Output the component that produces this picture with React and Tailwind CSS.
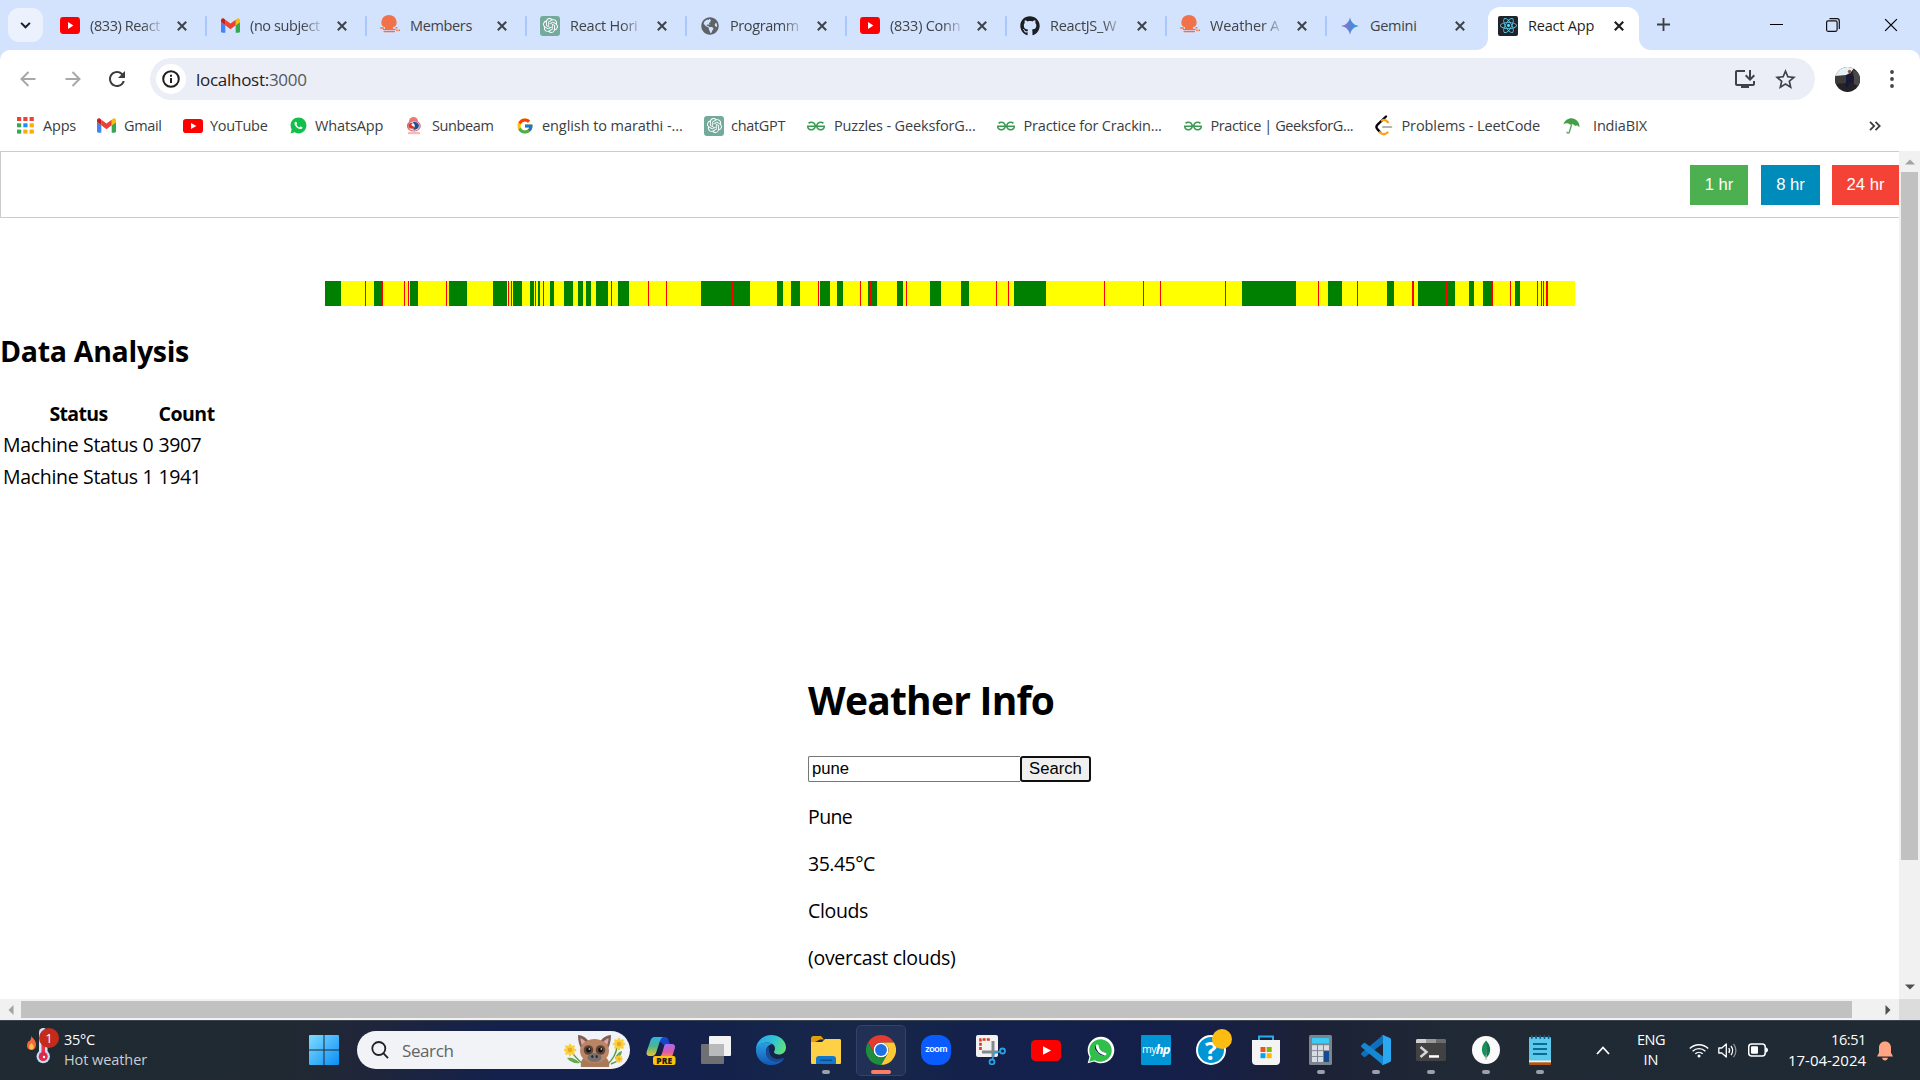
import React from "react";
import { SiOpenai, SiGeeksforgeeks } from "react-icons/si";
import { FaGlobeAmericas, FaReact, FaGithub } from "react-icons/fa";
import { FcGoogle } from "react-icons/fc";
import { RiWhatsappFill } from "react-icons/ri";
import { MdInstallDesktop, MdStarBorder, MdRefresh } from "react-icons/md";

/* ---------- small brand icons ---------- */

const YouTube = ({ className = "w-5 h-[15px]" }) => (
  <svg viewBox="0 0 20 15" preserveAspectRatio="none" className={className}>
    <rect width="20" height="15" rx="3" fill="#f00" />
    <path d="M8 4.400v6.200l5.400-3.100z" fill="#fff" />
  </svg>
);

const Gmail = () => (
  <svg viewBox="52 42 88 66" className="w-[19px] h-[15px]">
    <path fill="#4285f4" d="M58 108h14V74L52 59v43c0 3.32 2.69 6 6 6" />
    <path fill="#34a853" d="M120 108h14c3.32 0 6-2.69 6-6V59l-20 15" />
    <path fill="#fbbc04" d="M120 48v26l20-15v-8c0-7.42-8.47-11.65-14.4-7.2" />
    <path fill="#ea4335" d="M72 74V48l24 18 24-18v26L96 92" />
    <path fill="#c5221f" d="M52 51v8l20 15V48l-5.6-4.2c-5.94-4.45-14.4-.22-14.4 7.2" />
  </svg>
);

const Octopus = () => (
  <svg viewBox="0 0 20 18" className="-mt-[3px] w-5 h-[18px]" fill="#f0714a">
    <path d="M3 11.600C0 9.500.8 0 9 0s9 9.500 6 11.600c-1 .6-2 .3-2 .3v1.800h2.600v1.200H2.800v-1.200H5v-1.800s-1 .3-2-.3z" />
    <rect x="3.500" y="15.800" width="11.500" height="1.400" rx=".6" />
    <rect x="0" y="12.300" width="4" height="1.400" rx=".7" />
    <rect x="15.600" y="12" width="1.800" height="1.500" />
    <rect x="16.200" y="14.600" width="1.600" height="1.500" />
    <rect x="18.400" y="14.600" width="1.600" height="1.500" />
  </svg>
);

const OpenAI = () => (
  <span className="flex w-5 h-5 items-center justify-center rounded-[3px] bg-[#74aa9c]">
    <SiOpenai size={15} color="#fff" />
  </span>
);

const Gemini = () => (
  <svg viewBox="0 0 18 18" className="w-[18px] h-[18px]">
    <defs>
      <linearGradient id="gem" x1="0" x2="1">
        <stop offset="0" stopColor="#a06cc9" />
        <stop offset=".5" stopColor="#5a83d8" />
        <stop offset="1" stopColor="#16a5dc" />
      </linearGradient>
    </defs>
    <path d="M9 0c.7 5 4 8.300 9 9-5 .7-8.300 4-9 9-.7-5-4-8.300-9-9 5-.7 8.300-4 9-9z" fill="url(#gem)" />
  </svg>
);

const ReactLogo = () => (
  <span className="flex w-5 h-5 items-center justify-center rounded-[2px] bg-[#20232a]">
    <FaReact size={17} color="#61dafb" />
  </span>
);

const AppsGrid = () => (
  <svg viewBox="0 0 17 17" className="w-[17px] h-[17px]">
    {["#ea4335", "#ea4335", "#ea4335", "#34a853", "#1a8cff", "#fbab05", "#34a853", "#fbab05", "#fbab05"].map((c, i) => (
      <rect key={i} x={(i % 3) * 6.3} y={Math.floor(i / 3) * 6.3} width="4.200" height="4" fill={c} />
    ))}
  </svg>
);

const Sunbeam = () => (
  <svg viewBox="0 0 16 18" className="w-4 h-[18px]">
    <circle cx="7.500" cy="4.500" r="4.500" fill="#e87a7a" />
    <path d="M.8 9a7 5.500 0 0 1 14 0 7 5.500 0 0 1-14 0z" fill="#e06a6a" />
    <ellipse cx="8" cy="9" rx="5.500" ry="4.600" fill="#f4f7fc" />
    <path d="M6.500 5.500c3-1.500 6.500.5 6.500 3.500-.5 3-4 4.500-6.500 3.300 3-2 3-5 0-6.800z" fill="#1f4d96" />
    <path d="M2.500 8c1-2.500 4-3.300 5-1-1 .5-1 2.500 1 3.500-2 2.500-6 1.500-6-2.500z" fill="#d8352f" />
    <circle cx="6.800" cy="7.800" r="1.300" fill="#fff" />
    <path d="M2 15h12v2.200H2z" fill="#f1bcbc" />
  </svg>
);

const LeetCode = () => (
  <svg viewBox="0 0 18 21" className="w-[18px] h-[21px]" fill="none" strokeLinecap="round">
    <path d="M11 1.500 2.600 9.600c-1.600 1.600-1.600 3.200 0 4.800l2.600 2.800" stroke="#000" strokeWidth="2.300" />
    <path d="M5 17.200c2.500 2.600 5 2.600 7.500.3" stroke="#ffa116" strokeWidth="2.300" />
    <path d="M7 5.500c2-1.200 4-.8 6 1.700" stroke="#ffa116" strokeWidth="2.300" />
    <path d="M8 12h8.300" stroke="#b3b3b3" strokeWidth="2.100" />
  </svg>
);

const Umbrella = () => (
  <svg viewBox="0 0 17 16" className="w-[17px] h-4">
    <path d="M.5 6.500C2 1 8-1 12 1.300c3 1.600 4.700 4.200 4.500 8-1.500-1.800-3-2-4.300-1.400C10.500 6 9 5.800 7.300 6.700 5 5 2.500 4.900.5 6.500z" fill="#43a047" />
    <path d="M8.600 6.500 6.400 14c-.4 1.500-2.400 1.500-2.600-.3" fill="none" stroke="#5aa35e" strokeWidth="1.300" />
  </svg>
);

/* ---------- browser chrome ---------- */

const Cross = ({ className = "w-[10px] h-[10px]", width = 2 }) => (
  <svg viewBox="0 0 10 10" className={className} fill="none" stroke="currentColor" strokeWidth={width}>
    <path d="M.8.8l8.400 8.400M9.200.8.800 9.200" />
  </svg>
);

const tabs = [
  { icon: <YouTube className="w-5 h-[17px]" />, title: "(833) React", t: "tracking-[-0.4px]", fade: true },
  { icon: <Gmail />, title: "(no subject", t: "tracking-[-0.4px]", fade: true },
  { icon: <Octopus />, title: "Members", t: "tracking-[-0.36px]" },
  { icon: <OpenAI />, title: "React Hori", t: "tracking-[-0.25px]", fade: true },
  { icon: <FaGlobeAmericas size={18} color="#5f6368" />, title: "Programm", t: "tracking-[-0.4px]", fade: true },
  { icon: <YouTube className="w-5 h-[17px]" />, title: "(833) Conn", t: "tracking-[-0.25px]", fade: true },
  { icon: <FaGithub size={20} color="#1b1f24" />, title: "ReactJS_W", t: "tracking-[-0.3px]", fade: true },
  { icon: <Octopus />, title: "Weather A", t: "tracking-[-0.15px]", fade: true },
  { icon: <Gemini />, title: "Gemini", t: "tracking-[-0.3px]" },
];

const TabStrip = () => (
  <div className="flex h-[50px] bg-[#d3e2fd] text-[#3f4347]">
    <div className="mt-2 ml-2 flex h-[34px] w-[35px] items-center justify-center rounded-[11px] bg-[#ebf2fe]">
      <svg viewBox="0 0 12 8" className="w-[11px] h-[7px]" fill="none" stroke="#1f1f1f" strokeWidth="2.300">
        <path d="M1 1l5 5 5-5" />
      </svg>
    </div>
    <div className="ml-1 flex">
      {tabs.map((tab, i) => (
        <div key={i} className="flex h-[50px] w-[160px] shrink-0 items-center pt-px last:w-[161px] last:[&>svg]:ml-[12px]">
          <span className="ml-[12px] flex w-[22px] justify-center">{tab.icon}</span>
          <span
            className={`ml-[9px] w-[73px] whitespace-nowrap text-[14.5px] ${
              tab.fade ? "[mask-image:linear-gradient(to_right,black_72%,transparent_102%)]" : ""
            } ${tab.t}`}
          >
            {tab.title}
          </span>
          <Cross className="ml-[14px] w-[10px] h-[10px]" />
          <span className={i < 8 ? "ml-[18px] h-5 w-[2px] rounded bg-[#a8c7fa]" : "hidden"} />
        </div>
      ))}
    </div>
    <div className="-ml-[12px] mt-[38px] h-3 w-3 overflow-hidden bg-white">
      <div className="h-3 w-3 rounded-br-xl bg-[#d3e2fd]" />
    </div>
    <div className="mt-[7px] flex h-[43px] w-[151px] items-center rounded-t-xl bg-white pb-[6px] text-[#1f1f1f]">
      <span className="ml-[10px]">
        <ReactLogo />
      </span>
      <span className="ml-[10px] text-[14.5px] tracking-[-0.2px]">React App</span>
      <Cross className="ml-[20px] w-[10px] h-[10px]" width={2.2} />
    </div>
    <div className="mt-[38px] h-3 w-3 bg-white">
      <div className="h-3 w-3 rounded-bl-xl bg-[#d3e2fd]" />
    </div>
    <svg viewBox="0 0 14 14" className="ml-[6px] mt-[18px] w-[13px] h-[13px]" stroke="#3c4043" strokeWidth="2">
      <path d="M7 0v14M0 7h14" />
    </svg>
    <div className="ml-auto mr-[22px] flex h-[49px] items-center text-black">
      <span className="h-px w-[13px] bg-black" />
      <svg viewBox="0 0 14 14" className="ml-[43px] w-[14px] h-[14px]" fill="none" stroke="#111" strokeWidth="1.200">
        <rect x=".6" y="2.800" width="10.500" height="10.500" rx="1.500" />
        <path d="M3.500.7H11a2.300 2.300 0 0 1 2.300 2.300v8" />
      </svg>
      <Cross className="ml-[44px] w-[14px] h-[14px]" width={0.9} />
    </div>
  </div>
);

const Toolbar = () => (
  <div className="bg-[#d3e2fd]">
    <div className="flex h-[50px] items-start rounded-t-[10px] bg-white pt-2">
      <div className="flex h-[42px] w-[150px] items-center pl-5">
        <svg viewBox="0 0 16 16" className="w-4 h-4" fill="none" stroke="#a8a8a8" strokeWidth="2">
          <path d="M15.500 8H1.500M8.500 1 1.500 8l7 7" />
        </svg>
        <svg viewBox="0 0 16 16" className="ml-[29px] w-4 h-4" fill="none" stroke="#a8a8a8" strokeWidth="2">
          <path d="M.5 8h14M7.500 1l7 7-7 7" />
        </svg>
        <MdRefresh size={24} color="#3c3c3c" className="ml-[24px]" />
      </div>
      <div className="flex h-[42px] w-[1665px] items-center rounded-full bg-[#ebeef7]">
        <span className="ml-[6px] flex h-[30px] w-[30px] items-center justify-center rounded-full bg-white">
          <svg viewBox="0 0 18 18" className="w-[18px] h-[18px]" fill="none" stroke="#1f1f1f" strokeWidth="2">
            <circle cx="9" cy="9" r="7.800" />
            <path d="M9 8v5M9 4.700v2" />
          </svg>
        </span>
        <span className="ml-[10px] pt-px text-[17px] tracking-[-0.28px] text-[#1f2124]">
          localhost:<span className="text-[#55585c]">3000</span>
        </span>
        <MdInstallDesktop size={24} color="#3f4248" className="ml-auto mr-4" />
        <MdStarBorder size={25} color="#3f4248" className="mr-[17px]" />
      </div>
      <svg viewBox="0 0 25 25" className="ml-5 mt-[9px] w-[25px] h-[25px]">
        <defs>
          <clipPath id="avatar">
            <circle cx="12.500" cy="12.500" r="12.500" />
          </clipPath>
        </defs>
        <g clipPath="url(#avatar)">
          <rect width="25" height="25" fill="#232227" />
          <path d="M0 0h20l-4 5-2 4-14 0z" fill="#e3f1f4" />
          <path d="M0 9l11-1 1 8-12 1z" fill="#3f3a3a" />
          <path d="M18 3l7 3v14l-6-3z" fill="#4c4748" />
          <circle cx="14.500" cy="4.500" r="1.700" fill="#8a5a4c" />
          <path d="M11 8l4-2 4 4-1 5-4 1-2 5-2-2 1-4z" fill="#161a35" />
        </g>
      </svg>
      <svg viewBox="0 0 4 18" className="ml-[30px] mt-[12px] w-1 h-[18px]" fill="#444">
        <circle cx="2" cy="2" r="1.900" />
        <circle cx="2" cy="9" r="1.900" />
        <circle cx="2" cy="16" r="1.900" />
      </svg>
    </div>
  </div>
);

const Geeks = () => <SiGeeksforgeeks size={18} color="#3b9a53" />;

const bookmarks = [
  { icon: <AppsGrid />, w: "w-[80px]", i: "w-[26px]", t: "tracking-[-0.2px]", label: "Apps" },
  { icon: <Gmail />, w: "w-[86px]", i: "w-[27px]", t: "tracking-[-0.35px]", label: "Gmail" },
  { icon: <YouTube className="w-5 h-[14px]" />, w: "w-[106px]", i: "w-[27px]", t: "tracking-[-0.3px]", label: "YouTube" },
  { icon: <RiWhatsappFill size={19} color="#11c04a" />, w: "w-[117px]", i: "w-[26px]", t: "tracking-[-0.12px]", label: "WhatsApp" },
  { icon: <Sunbeam />, w: "w-[110px]", i: "w-[26px]", t: "tracking-[-0.4px]", label: "Sunbeam" },
  { icon: <FcGoogle size={18} />, w: "w-[188px]", i: "w-[26px]", t: "tracking-[-0.08px]", label: "english to marathi -..." },
  { icon: <OpenAI />, w: "w-[103px]", i: "w-[27px]", t: "tracking-[-0.3px]", label: "chatGPT" },
  { icon: <Geeks />, w: "w-[190px]", i: "w-[27px]", t: "tracking-[-0.15px]", label: "Puzzles - GeeksforG..." },
  { icon: <Geeks />, w: "w-[187px]", i: "w-[26.5px]", t: "tracking-[-0.18px]", label: "Practice for Crackin..." },
  { icon: <Geeks />, w: "w-[191px]", i: "w-[26.5px]", t: "tracking-[-0.4px]", label: "Practice | GeeksforG..." },
  { icon: <LeetCode />, w: "w-[188px]", i: "w-[26.5px]", t: "tracking-[-0.1px]", label: "Problems - LeetCode" },
  { icon: <Umbrella />, w: "w-[100px]", i: "w-[30px]", t: "tracking-[-0.16px]", label: "IndiaBIX" },
];

const Bookmarks = () => (
  <div className="flex h-[51px] items-center bg-white pl-[17px] text-[14.5px] text-[#3a3d41]">
    {bookmarks.map((b) => (
      <div key={b.label} className={`flex shrink-0 items-center whitespace-nowrap ${b.w}`}>
        <span className={`shrink-0 ${b.i}`}>{b.icon}</span>
        <span className={b.t}>{b.label}</span>
      </div>
    ))}
    <svg viewBox="0 0 12 10" className="ml-auto mr-[39px] w-3 h-[10px]" fill="none" stroke="#3c4043" strokeWidth="1.800">
      <path d="M1 .8 5.200 5 1 9.200M6.500.8 10.700 5 6.500 9.200" />
    </svg>
  </div>
);

/* ---------- machine status timeline ---------- */

const END = 1575;
const timeline =
  "g325 y341 r365 y366 g374 r382 y383 r404 y405 r408 y409 g410 y418 r446 y447 g449 y467 g493 r501 g502 y507 r508 y509 r511 y512 g513 r519 g520 y522 g530 y534 r535 y536 g538 r539 y540 r543 y544 g550 y554 g564 y573 g578 y583 g586 y591 g596 y608 r611 y612 g618 y629 r648 y649 r666 y667 g701 r732 g733 r743 g744 y750 g777 y783 g791 y800 r818 y819 g820 y830 g837 y843 r860 y861 g868 r870 g871 y877 g897 y903 r906 y907 g930 y941 g961 y969 r996 y997 r1008 y1009 g1014 y1046 r1104 y1105 r1143 y1144 r1160 y1161 r1225 y1226 g1242 r1283 g1284 y1296 r1318 y1319 g1328 y1342 r1357 y1358 g1387 y1394 r1412 y1414 g1418 r1425 g1426 r1445 g1447 y1455 g1469 y1474 g1483 r1492 y1493 r1510 y1511 g1515 y1520 r1537 y1538 r1541 y1542 r1543 y1544 r1546 y1548"
    .split(" ")
    .map((s) => ({ color: s[0], start: Number(s.slice(1)) }));

const segmentColor = { g: "bg-[#008000]", y: "bg-[#ffff00]", r: "bg-[#ff0000]" };

const Timeline = () => (
  <div className="ml-[325px] mt-[63px] flex h-[25px] w-[1250px]">
    {timeline.map((s, i) => (
      <div
        key={s.start}
        className={`shrink-0 ${segmentColor[s.color]}`}
        style={{ width: (timeline[i + 1]?.start ?? END) - s.start }}
      />
    ))}
  </div>
);

/* ---------- page ---------- */

const Page = () => (
  <div className="h-[848px] w-[1899px] overflow-hidden bg-white text-black">
    <div className="flex h-[67px] items-center justify-end border border-r-0 border-[#ccc] font-['Liberation_Sans',sans-serif] text-[16.67px] text-white">
      <button className="h-10 w-[58px]  bg-[#4caf50]">1 hr</button>
      <button className="ml-[13px] h-10 w-[59px] bg-[#008cba]">8 hr</button>
      <button className="ml-3 h-10 w-[67px] bg-[#f44336]">24 hr</button>
    </div>
    <Timeline />
    <h2 className="mt-[25px] text-[28.5px] font-bold leading-[40px] tracking-[-0.3px]">Data Analysis</h2>
    <div className="mt-[27px] text-[19.5px]">
      <div className="flex h-[31px] font-bold leading-[31px]">
        <span className="w-[157px] text-center tracking-[-0.65px]">Status</span>
        <span className="pl-[1.5px] tracking-[-0.5px]">Count</span>
      </div>
      {[
        ["Machine Status 0", "3907"],
        ["Machine Status 1", "1941"],
      ].map(([k, v]) => (
        <div key={k} className="flex h-8 pl-[3px] leading-8">
          <span className="w-[155.5px] tracking-[-0.32px]">{k}</span>
          <span className="tracking-[-0.45px]">{v}</span>
        </div>
      ))}
    </div>
    <div className="ml-[808px] mt-[180px]">
      <h1 className="text-[39px] font-bold leading-[54px] tracking-[-0.78px]">Weather Info</h1>
      <div className="mt-[29px] flex font-['Liberation_Sans',sans-serif] text-[16.67px] leading-5">
        <div className="h-[26px] w-[212px] rounded-l-[2px] border border-r-0 border-[#767676] pl-[3px] pt-[2px]">pune</div>
        <button className="h-[26px] w-[71px] rounded-[3px] border-2 border-[#101010] bg-[#efefef]">Search</button>
      </div>
      <div className="mt-[21px] flex flex-col gap-[19px] text-[19.5px] leading-[28px]">
        <p className="tracking-[-0.6px]">Pune</p>
        <p className="tracking-[-0.5px]">35.45°C</p>
        <p className="tracking-[-0.35px]">Clouds</p>
        <p className="tracking-[-0.3px]">(overcast clouds)</p>
      </div>
    </div>
  </div>
);

const Arrow = ({ className, fill = "#505050" }) => (
  <svg viewBox="0 0 10 10" className={className} fill={fill}>
    <path d="M0 2.500h10L5 7.500z" />
  </svg>
);

const VerticalBar = () => (
  <div className="flex h-[848px] w-[21px] flex-col items-center bg-[#f1f1f1]">
    <Arrow className="mt-[6px] w-[10px] h-[10px] rotate-180" fill="#a3a3a3" />
    <div className="mt-[5px] h-[688px] w-[17px] bg-[#c1c1c1]" />
    <Arrow className="mb-[7px] mt-auto w-[10px] h-[10px]" />
  </div>
);

const HorizontalBar = () => (
  <div className="flex h-[21px] bg-[#f1f1f1]">
    <div className="flex w-[1899px] items-center">
      <Arrow className="ml-[6px] w-[10px] h-[10px] rotate-90" fill="#a3a3a3" />
      <div className="ml-[5px] h-[17px] w-[1831px] bg-[#c1c1c1]" />
      <Arrow className="ml-auto mr-[6px] w-[10px] h-[10px] -rotate-90" />
    </div>
    <div className="w-[21px] bg-[#dcdcdc]" />
  </div>
);

/* ---------- taskbar icons ---------- */

const Copilot = () => (
  <svg viewBox="0 0 30 30" className="w-[30px] h-[30px]">
    <defs>
      <linearGradient id="cpa" x1="0" y1="0" x2="0" y2="1">
        <stop offset="0" stopColor="#29b6e8" />
        <stop offset=".5" stopColor="#4fb58a" />
        <stop offset="1" stopColor="#ecc531" />
      </linearGradient>
      <linearGradient id="cpb" x1="0" y1="0" x2="0" y2="1">
        <stop offset="0" stopColor="#a66bf0" />
        <stop offset=".6" stopColor="#e05aa8" />
        <stop offset="1" stopColor="#f58b60" />
      </linearGradient>
    </defs>
    <path d="M8 2h11c2 0 3 1.500 3.600 3.500L24 10h-6z" fill="#1747c8" />
    <path d="M8.500 2H17c-2 1-3 3-4 7l-3 9c-.8 2-2 3-4 3H3.500C1 21 0 19 .7 16.500L4.500 5.500C5.300 3.300 6.500 2 8.500 2z" fill="url(#cpa)" />
    <path d="M20 9h6c2.500 0 3.500 2 2.800 4.500L26 22H13c2-1 2.500-2 3.500-5l1.500-5.500C18.400 10 19 9 20 9z" fill="url(#cpb)" />
    <rect x="7" y="21" width="22.500" height="9" rx="2" fill="#fdc30f" />
    <text x="18.200" y="28.600" textAnchor="middle" fontFamily="Open Sans" fontWeight="800" fontSize="8.500" fill="#1a1a1a">PRE</text>
  </svg>
);

const TaskView = () => (
  <svg viewBox="0 0 30 30" className="w-[30px] h-[30px]">
    <rect x="0" y="9" width="23" height="20" rx="1" fill="#6f7072" />
    <rect x="8" y="1" width="22" height="20" rx="1" fill="#f3f3f3" />
    <rect x="8" y="9" width="15" height="12" fill="#b9babc" />
  </svg>
);

const Edge = () => (
  <svg viewBox="0 0 30 30" className="w-[30px] h-[30px]">
    <defs>
      <linearGradient id="ea" x1="0" y1=".2" x2="1" y2=".5">
        <stop offset="0" stopColor="#2aa5e8" />
        <stop offset=".55" stopColor="#2fc3d8" />
        <stop offset="1" stopColor="#5fe07a" />
      </linearGradient>
      <linearGradient id="eb" x1="0" y1="0" x2="0" y2="1">
        <stop offset="0" stopColor="#2b9fe6" />
        <stop offset="1" stopColor="#1257b3" />
      </linearGradient>
    </defs>
    <path d="M15 0c9 0 15 6 15 12.500 0 4.500-3.500 7-7 7-3 0-5-1.300-5-2.500 0-1 1-1.500 1-3.500 0-3.500-3.500-6-8-6C6 7.500 1.500 10 0 15 0 6 7 0 15 0z" fill="url(#ea)" />
    <path d="M0 15C1 10 6 7.500 11 7.500c2 0 4 .5 5.500 1.500-4 .5-6.500 4-6.500 7.500 0 6 5 10 10 10 3 0 5-.7 7.500-2C25 28 20.500 30 15 30 6.500 30 0 23.500 0 15z" fill="url(#eb)" />
    <path d="M13 11.500c-2 1.500-3 3.500-3 6 0 5.500 4.500 9 10 9 3 0 5.500-1 7.500-2.300.8-.6.200-1.500-.7-1.100-7 3-15-.6-13.800-11.600z" fill="#1b4a94" />
  </svg>
);

const Folder = () => (
  <svg viewBox="0 0 30 28" className="w-[30px] h-7">
    <path d="M0 2.500C0 1 1 0 2.500 0H10l3 3.500h-4L0 8z" fill="#e09f0b" />
    <path d="M0 6h11l3-3h14.500c1 0 1.500.7 1.500 1.500v22c0 1-.5 1.500-1.500 1.500h-27C.5 28 0 27.500 0 26.500z" fill="#fdd046" />
    <path d="M5 28v-5c0-2 1-3 3-3h14c2 0 3 1 3 3v5z" fill="#1178cc" />
    <rect x="9" y="23.500" width="12" height="1.500" rx=".7" fill="#0a4f93" />
  </svg>
);

const Chrome = () => (
  <svg viewBox="0 0 48 48" className="w-[30px] h-[30px]">
    <circle cx="24" cy="24" r="12" fill="#fff" />
    <path d="M24 12h20.781a23.994 23.994 0 0 0-41.564.003L13.608 30l.009-.002A11.985 11.985 0 0 1 24 12z" fill="#e33b2e" />
    <circle cx="24" cy="24" r="9.500" fill="#1f6fe5" />
    <path d="M34.391 30.003 24.001 48A23.994 23.994 0 0 0 44.780 12.003H23.999l-.003.009a11.985 11.985 0 0 1 10.395 17.991z" fill="#fcc934" />
    <path d="M13.609 30.003 3.218 12.006A23.994 23.994 0 0 0 24.003 48l10.390-17.997-.007-.007a11.985 11.985 0 0 1-20.777.007z" fill="#1e8e3e" />
  </svg>
);

const Zoom = () => (
  <span className="flex h-[30px] w-[30px] items-center justify-center rounded-[12px] bg-[#0b5cff] pb-[2px] font-['Lato',sans-serif] text-[9.5px] font-bold tracking-[-0.3px] text-white">
    zoom
  </span>
);

const Snip = () => (
  <svg viewBox="0 0 30 30" className="w-[30px] h-[30px]">
    <rect x="0" y="0" width="22" height="22" rx="2" fill="#f2f2f2" />
    <path d="M4.500 15V4.500H15" fill="none" stroke="#d83b1f" strokeWidth="2.600" strokeDasharray="3 1.200" />
    <path d="M6 17h16M17 6v16" fill="none" stroke="#85898e" strokeWidth="3" />
    <circle cx="26.500" cy="16" r="2.500" fill="none" stroke="#2c9fe0" strokeWidth="1.800" />
    <circle cx="16" cy="27" r="2.500" fill="none" stroke="#2c9fe0" strokeWidth="1.800" />
    <path d="M18 18l6-1.500M18 18l-1.500 6.500" stroke="#2c9fe0" strokeWidth="1.600" />
  </svg>
);

const WhatsAppApp = () => (
  <span className="relative flex h-[28px] w-[28px] items-center justify-center">
    <RiWhatsappFill size={32} color="#fff" className="absolute -left-[2px] -top-[2px]" />
    <RiWhatsappFill size={27} color="#2fbf4a" className="relative" />
    <svg viewBox="0 0 24 24" className="absolute left-[1px] top-[1px] w-[26px] h-[26px]" fill="none" stroke="#fff" strokeWidth="2.600" strokeLinecap="round">
      <path d="M8.500 8.300c0 3.600 3.300 7.200 7.200 7.400" />
    </svg>
  </span>
);

const MyHp = () => (
  <span className="flex h-[30px] w-[30px] items-center justify-center rounded-[1px] bg-[#0096d6] pb-px font-['Open_Sans',sans-serif] text-white">
    <span className="text-[10.5px] tracking-[-0.6px]">my</span>
    <span className="text-[13px] font-bold italic tracking-[-0.8px]">hp</span>
  </span>
);

const Help = () => (
  <span className="relative flex h-[30px] w-[30px] items-center justify-center rounded-full border-2 border-white bg-[#0096d6] font-['Open_Sans',sans-serif] text-[25px] font-bold leading-none text-white">
    ?
    <span className="absolute -right-[8px] -top-[8px] h-5 w-5 rounded-full bg-[#fdbc11]" />
  </span>
);

const Store = () => (
  <svg viewBox="0 0 30 30" className="w-[30px] h-[30px]">
    <path d="M8 7V1.500h14V7" fill="none" stroke="#27aee8" strokeWidth="2" />
    <path d="M1 5h28v21c0 2.500-1.500 4-4 4H5c-2.500 0-4-1.500-4-4z" fill="#f4f4f4" />
    <path d="M8 5.500h14" stroke="#27aee8" strokeWidth="0" />
    <rect x="9.500" y="12" width="5" height="5" fill="#f25022" />
    <rect x="15.700" y="12" width="5" height="5" fill="#7fba00" />
    <rect x="9.500" y="18.200" width="5" height="5" fill="#00a4ef" />
    <rect x="15.700" y="18.200" width="5" height="5" fill="#ffb900" />
  </svg>
);

const Calculator = () => (
  <svg viewBox="0 0 23 30" className="w-[23px] h-[30px]">
    <rect width="23" height="30" rx="1.500" fill="#7b858e" />
    <rect x="3" y="3" width="17" height="5.500" fill="#3ccbf4" />
    {[0, 1, 2, 3, 4, 6, 7].map((n) => (
      <rect key={n} x={3 + (n % 3) * 6} y={10.2 + Math.floor(n / 3) * 5.9} width="5" height="5" fill="#d7dde2" />
    ))}
    <rect x="15" y="16.100" width="5" height="10.900" fill="#164a94" />
  </svg>
);

const VsCode = () => (
  <svg viewBox="0 0 30 30" className="w-[30px] h-[30px]">
    <path d="M22 0 22 8.500 4.500 21.800c-.6.500-1.300.4-1.800 0L.6 19.900c-.7-.6-.7-1.500 0-2.100z" fill="#0f6fb8" />
    <path d="M22 30v-8.500L4.500 8.200c-.6-.5-1.300-.4-1.800 0L.6 10.100c-.7.6-.7 1.500 0 2.100z" fill="#1688d3" />
    <path d="M22 0l7 3c.6.300 1 .9 1 1.600v20.800c0 .7-.4 1.300-1 1.600L22 30c-.8.300-1.500 0-2-.4.900.5 2 .1 2-1.100v-27c0-1.200-1.100-1.600-2-1.100.5-.4 1.200-.7 2-.4z" fill="#2aa8f2" />
  </svg>
);

const Terminal = () => (
  <svg viewBox="0 0 30 22" className="w-[30px] h-[22px]">
    <rect width="30" height="22" rx="1.500" fill="#424242" />
    <path d="M0 1.500C0 .7.700 0 1.500 0H10v4H0z" fill="#d0d0d0" />
    <path d="M10 0h10v4H10z" fill="#9a9a9a" />
    <path d="M20 0h8.500c.8 0 1.500.7 1.500 1.500V4H20z" fill="#6c6c6c" />
    <path d="M4.500 8l6 5-6 5" fill="none" stroke="#d5d5d5" strokeWidth="2.500" />
    <rect x="13" y="16.200" width="10" height="2.500" fill="#fff" />
  </svg>
);

const Mongo = () => (
  <svg viewBox="0 0 28 28" className="w-7 h-7">
    <circle cx="14" cy="14" r="14" fill="#fafafa" />
    <path d="M14 4.500c5.500 5.500 5.500 12.500.3 17.500z" fill="#10774f" />
    <path d="M14 4.500C8.500 10 8.500 17 14 22z" fill="#13935a" />
    <rect x="13.500" y="19" width="1" height="5" fill="#9fb3a5" />
  </svg>
);

const Notepad = () => (
  <svg viewBox="0 0 22 30" className="w-[22px] h-[30px]">
    <rect y="2" width="22" height="25" rx="1" fill="#5cc8ea" />
    <path d="M0 26h22v3c0 .6-.4 1-1 1H1c-.6 0-1-.4-1-1z" fill="#b5560f" />
    <rect y="25.500" width="22" height="1.800" fill="#f0f0f0" />
    {[2, 6.2, 10.4, 14.6, 18.8].map((x) => (
      <rect key={x} x={x} y="0" width="1.700" height="4" rx=".8" fill="#0c5c85" />
    ))}
    <path d="M4 9h14M4 14h14M4 19h14" stroke="#0b6a96" strokeWidth="1.800" />
  </svg>
);

const apps = [
  { icon: <Copilot /> },
  { icon: <TaskView /> },
  { icon: <Edge /> },
  { icon: <Folder />, dot: true },
  { icon: <Chrome />, active: true },
  { icon: <Zoom /> },
  { icon: <Snip /> },
  { icon: <YouTube className="w-[30px] h-[21px]" /> },
  { icon: <WhatsAppApp /> },
  { icon: <MyHp /> },
  { icon: <Help /> },
  { icon: <Store /> },
  { icon: <Calculator />, dot: true },
  { icon: <VsCode />, dot: true },
  { icon: <Terminal />, dot: true },
  { icon: <Mongo />, dot: true },
  { icon: <Notepad />, dot: true },
];

const WeatherWidget = () => (
  <div className="flex w-[309px] pl-[26px] text-[14.5px] text-white">
    <div className="relative w-[38px]">
      <svg viewBox="0 0 34 44" className="mt-px w-[34px] h-11">
        <path d="M5.500 14c1 2.500 4.500 4 4.500 8.500C10 26 8 28 5.500 28S1 26.500 1 23.500c0-2 1-3 1.500-4.500C4 20 5 17 5.500 14z" fill="#f26a3c" />
        <path d="M5.500 21c1.300 1.500 2.200 2.400 2.200 4 0 1.500-.9 2.500-2.200 2.500s-2.300-1-2.300-2.500 1-2.500 2.300-4z" fill="#fdc14b" />
        <rect x="13" y="6" width="8.500" height="28" rx="4.200" fill="#d6e6f5" />
        <circle cx="17.200" cy="34.500" r="6.700" fill="#c5dcf2" />
        <rect x="15.500" y="16" width="3.500" height="17" fill="#e3344f" />
        <circle cx="17.200" cy="34.500" r="4.500" fill="#e0294a" />
        <circle cx="18" cy="35" r="1.200" fill="#fff" />
      </svg>
      <span className="absolute left-[13px] top-[7px] flex h-5 w-5 items-center justify-center rounded-full bg-[#c42b1c] text-[13px] leading-none">
        1
      </span>
    </div>
    <div className="pt-[9px] leading-5">
      <div className="tracking-[-0.3px]">35°C</div>
      <div className="tracking-[-0.08px] text-[#c9ced2]">Hot weather</div>
    </div>
  </div>
);

const Flower = ({ x, y, r }) => (
  <g>
    {[0, 45, 90, 135].map((a) => (
      <ellipse key={a} cx={x} cy={y} rx={r} ry={r * 0.32} fill="#f8cf3c" transform={`rotate(${a} ${x} ${y})`} />
    ))}
    <circle cx={x} cy={y} r={r * 0.35} fill="#eda91c" />
  </g>
);

const SearchArt = () => (
  <svg viewBox="0 0 62 38" className="mr-[4px] w-[62px] h-[38px]">
    <path d="M6 18c3 6 7 10 13 15M53 16c-1 8-4 12-9 17M57 27c-3 3-7 5-10 6" fill="none" stroke="#5b9a46" strokeWidth="1.500" />
    <path d="M3 27c5-1 9 1 13 5-5 1-10-1-13-5zM58 20c-4 1-6 4-7 8 4-1 7-4 7-8z" fill="#6aa84f" />
    <Flower x={6} y={19} r={6.5} />
    <Flower x={55} y={13} r={6.5} />
    <Flower x={55} y={28} r={4} />
    <path d="M17 36c-1-6 2-9 4-10h20c3 2 5 5 4 10z" fill="#a9795a" />
    <path d="M14 4c4 0 9 3 11 7l-7 8c-3-4-4-10-4-15zM47 4c-4 0-9 3-11 7l7 8c3-4 4-10 4-15z" fill="#7d5f57" />
    <path d="M16.500 7c3 1.500 5 3 6.500 6l-4 3c-2-3-2.500-6-2.500-9zM44.500 7c-3 1.500-5 3-6.500 6l4 3c2-3 2.500-6 2.500-9z" fill="#e5a3a3" />
    <ellipse cx="30.500" cy="20" rx="14.500" ry="12" fill="#b98563" />
    <circle cx="24.500" cy="19" r="4.800" fill="#5f4238" />
    <circle cx="36.500" cy="19" r="4.800" fill="#5f4238" />
    <circle cx="24.500" cy="19" r="2.400" fill="#111" />
    <circle cx="36.500" cy="19" r="2.400" fill="#111" />
    <circle cx="25.300" cy="18" r=".8" fill="#fff" />
    <circle cx="37.300" cy="18" r=".8" fill="#fff" />
    <ellipse cx="30.500" cy="26.500" rx="7" ry="4.500" fill="#77706f" />
    <ellipse cx="28.300" cy="25.500" rx="1.100" ry="1.500" fill="#2b2627" />
    <ellipse cx="32.700" cy="25.500" rx="1.100" ry="1.500" fill="#2b2627" />
  </svg>
);

const Tray = () => (
  <div className="ml-auto flex h-[58px] items-center text-[14.5px] text-white">
    <svg viewBox="0 0 14 9" className="mr-[27px] w-[14px] h-[9px]" fill="none" stroke="#fff" strokeWidth="1.800">
      <path d="M1 8l6-6.500L13 8" />
    </svg>
    <div className="mr-[24px] w-7 text-center leading-5">
      <div className="tracking-[-0.5px]">ENG</div>
      <div>IN</div>
    </div>
    <svg viewBox="0 0 20 15" className="mr-[9px] w-5 h-[15px]" fill="none" stroke="#fff" strokeWidth="1.400">
      <path d="M.8 5.500a13 13 0 0 1 18.400 0M3.600 8.200a9.200 9.200 0 0 1 12.800 0M6.300 10.800a5.400 5.400 0 0 1 7.400 0" />
      <circle cx="10" cy="13" r="1.500" fill="#fff" stroke="none" />
    </svg>
    <svg viewBox="0 0 20 17" className="mr-[10px] w-5 h-[17px]" fill="none" stroke="#fff" strokeWidth="1.300">
      <path d="M.8 6v5h3l4.500 4V2L3.800 6z" strokeLinejoin="round" />
      <path d="M10.800 6c1 1.500 1 3.500 0 5M13 4c2 2.700 2 6.300 0 9" />
      <path d="M15.500 1.800c3.200 4 3.200 9.400 0 13.400" stroke="#8b939b" />
    </svg>
    <svg viewBox="0 0 20 14" className="mr-[20px] w-5 h-[14px]">
      <rect x=".7" y="1" width="16.500" height="12" rx="3" fill="none" stroke="#fff" strokeWidth="1.500" />
      <rect x="3" y="3.200" width="7" height="7.600" rx="1" fill="#fff" />
      <path d="M18 4.500c1.300.3 2 1.300 2 2.500s-.7 2.200-2 2.500z" fill="#fff" />
    </svg>
    <div className="w-[78px] whitespace-nowrap text-right leading-5">
      <div className="tracking-[-0.4px]">16:51</div>
      <div className="text-[15px] tracking-[-0.03px]">17-04-2024</div>
    </div>
    <svg viewBox="0 0 16 20" className="ml-[11px] mr-[27px] mt-[2px] w-4 h-5" fill="#ffa583">
      <path d="M8 .5c3.600 0 6 2.700 6 6v5.300l2 3.700H0l2-3.700V6.500c0-3.300 2.400-6 6-6zM5 16.800h6c-.3 1.600-1.500 2.700-3 2.700s-2.700-1.100-3-2.700z" />
    </svg>
  </div>
);

const Taskbar = () => (
  <div className="flex h-[60px] border-t border-[#3c444e] bg-[linear-gradient(to_right,#1f2a33_0%,#202932_15%,#20263a_19%,#13214c_26%,#13214c_36%,#172748_44%,#13214c_52%,#151f48_62%,#1c2137_68%,#202935_76%,#1f2a33_100%)]">
    <WeatherWidget />
    <svg viewBox="0 0 30 30" className="mt-[14px] w-[30px] h-[30px]">
      <defs>
        <linearGradient id="win" x1="0" y1="0" x2="1" y2="1">
          <stop offset="0" stopColor="#7fdcff" />
          <stop offset="1" stopColor="#0a8ef5" />
        </linearGradient>
      </defs>
      <path d="M1 0h13.500v14.500H0V1q0-1 1-1zM15.500 0H29q1 0 1 1v13.500H15.500zM0 15.500h14.500V30H1q-1 0-1-1zM15.500 15.500H30V29q0 1-1 1H15.500z" fill="url(#win)" />
    </svg>
    <div className="ml-[18px] mt-[10px] flex h-[38px] w-[273px] items-center overflow-hidden rounded-full bg-[#f1f3f6]">
      <svg viewBox="0 0 18 18" className="ml-[14px] w-[18px] h-[18px]" fill="none" stroke="#222" strokeWidth="1.800">
        <circle cx="7.800" cy="7.500" r="6.500" />
        <path d="M12.300 12.200 17 17.200" />
      </svg>
      <span className="ml-[13px] mr-auto pt-px text-[17px] tracking-[-0.4px] text-[#616365]">Search</span>
      <SearchArt />
    </div>
    <div className="ml-[4px] flex">
      {apps.map((a, i) => (
        <div key={i} className="flex w-[54.94px] justify-center">
          <div
            className={
              a.active
                ? "mt-[4px] flex h-[51px] w-[50px] flex-col items-center rounded-[5px] border border-[#34416a] bg-[#223056]"
                : "mt-[5px] flex h-[50px] w-[50px] flex-col items-center"
            }
          >
            <div className="mt-[8px] flex h-8 items-center">{a.icon}</div>
            {a.active && <span className="mt-[4px] h-1 w-5 rounded-full bg-[#fb7f65]" />}
            {a.dot && <span className="mt-[4px] h-1 w-[8px] rounded-full bg-[#9a9fa9]" />}
          </div>
        </div>
      ))}
    </div>
    <Tray />
  </div>
);

export default function App() {
  return (
    <div className="flex h-[1080px] w-[1920px] flex-col overflow-hidden bg-white font-['Open_Sans','Noto_Sans',sans-serif]">
      <TabStrip />
      <Toolbar />
      <Bookmarks />
      <div className="flex">
        <Page />
        <VerticalBar />
      </div>
      <HorizontalBar />
      <Taskbar />
    </div>
  );
}
